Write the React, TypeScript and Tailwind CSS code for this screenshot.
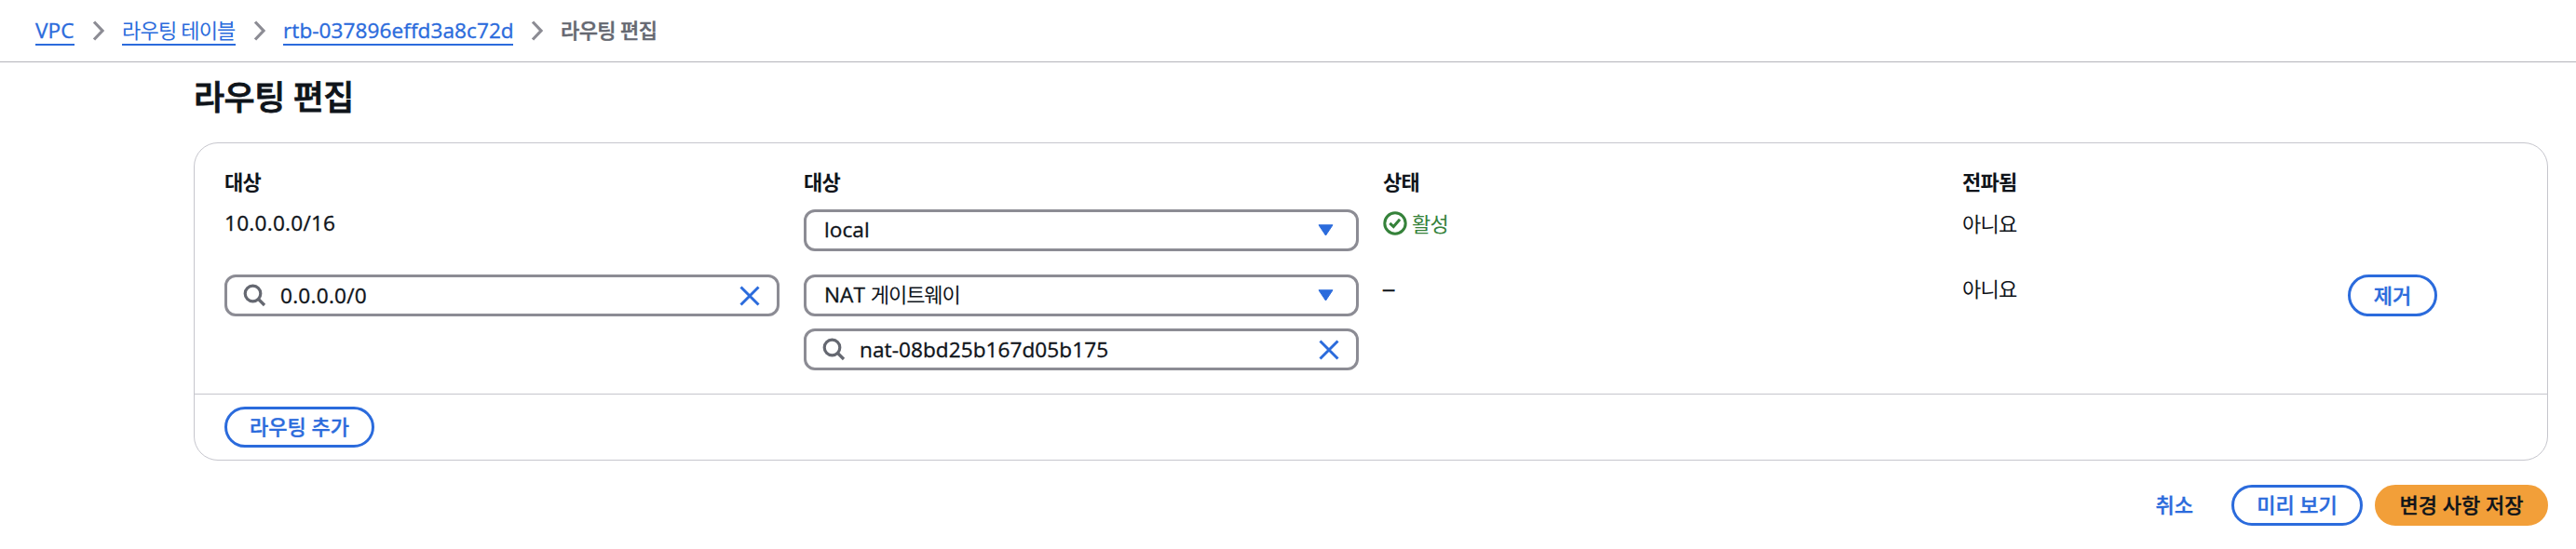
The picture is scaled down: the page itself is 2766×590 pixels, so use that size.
import React from "react";

const Chevron = () => (
  <svg width="14" height="24" viewBox="0 0 14 24" fill="none" stroke="#8c8c94" strokeWidth="3.2" className="shrink-0">
    <path d="M2 2.5l9 9.5-9 9.5" />
  </svg>
);

const SearchIcon = () => (
  <svg width="25" height="25" viewBox="0 0 25 25" fill="none" stroke="#656871" strokeWidth="3.2" className="shrink-0">
    <circle cx="10.5" cy="10.5" r="8.3" />
    <path d="M16 16l7 7" />
  </svg>
);

const CloseIcon = () => (
  <svg width="22" height="22" viewBox="0 0 22 22" fill="none" stroke="#2b6bdc" strokeWidth="3" className="shrink-0">
    <path d="M1.5 1.5l19 19M20.5 1.5l-19 19" />
  </svg>
);

const Caret = () => (
  <svg width="18" height="13" viewBox="0 0 18 13" fill="#2b6bdc" stroke="#2b6bdc" strokeLinejoin="round" className="shrink-0">
    <path d="M1 .8h15L8.5 12z" />
  </svg>
);

const CheckIcon = () => (
  <svg width="26" height="26" viewBox="0 0 26 26" fill="none" stroke="#35823a" strokeWidth="3" className="shrink-0">
    <circle cx="13" cy="13" r="11.2" />
    <path d="M7.3 12.8l4 3.8 6.8-7.8" />
  </svg>
);

const Latin = ({ children }: { children: string }) => (
  <span className="text-[22.6px] font-medium tracking-[0.06px] [-webkit-text-stroke:0.35px]">{children}</span>
);

const Digits = ({ children }: { children: string }) => (
  <span className="text-[22.6px] font-medium tracking-[0.25px] [-webkit-text-stroke:0.35px]">{children}</span>
);

const Hangul = ({ children }: { children: string }) => (
  <span className="tracking-[-0.8px]">{children}</span>
);

const Select = ({ children }: { children: React.ReactNode }) => (
  <div className="flex h-[45px] w-[596px] items-center justify-between rounded-[12px] border-[3px] border-[#8c8c94] pr-[23px] pb-px pl-[19px]">
    <span className="-mt-px">{children}</span>
    <Caret />
  </div>
);

const SearchInput = ({ children }: { children: React.ReactNode }) => (
  <div className="flex h-[45px] w-[596px] items-center rounded-[12px] border-[3px] border-[#8c8c94] pr-[18px] pl-[17px]">
    <SearchIcon />
    <span className="-mt-px ml-[15px] flex-1">{children}</span>
    <CloseIcon />
  </div>
);

const Button = ({ children, className }: { children: React.ReactNode; className: string }) => (
  <button className={`flex shrink-0 items-center justify-center rounded-full border-[3px] pb-0.5 font-medium whitespace-nowrap [-webkit-text-stroke:0.35px] ${className}`}>
    {children}
  </button>
);

const Crumb = ({ children, className }: { children: React.ReactNode; className: string }) => (
  <a className={`h-[29px] shrink-0 border-b-2 border-[#2b6bdc] leading-[25px] whitespace-nowrap text-[#2b6bdc] ${className}`}>
    {children}
  </a>
);

export default function App() {
  return (
    <div className="h-[590px] w-[2766px] overflow-hidden bg-white font-['Open_Sans','Noto_Sans_CJK_KR',sans-serif] text-[22px] leading-[30px] text-[#0f141a]">
      <nav className="flex h-[67px] items-start border-b border-[#b4b4bb] pt-5 pl-[38px]">
        <Crumb className="w-[42px]"><Latin>VPC</Latin></Crumb>
        <div className="mr-[18px] ml-[19px] flex h-[25px] items-center"><Chevron /></div>
        <Crumb className="w-[122px]"><Hangul>라우팅 테이블</Hangul></Crumb>
        <div className="mr-[18px] ml-[19px] flex h-[25px] items-center"><Chevron /></div>
        <Crumb className="w-[247px]"><Latin>rtb-037896effd3a8c72d</Latin></Crumb>
        <div className="mr-[18px] ml-[19px] flex h-[25px] items-center"><Chevron /></div>
        <span className="leading-[25px] font-medium tracking-[-0.6px] text-[#656871] [-webkit-text-stroke:0.45px]">라우팅 편집</span>
      </nav>
      <main className="pr-[30px] pl-[208px]">
        <h1 className="h-[86px] pt-[14px] text-[36px] leading-[48px] font-medium tracking-[-0.5px] [-webkit-text-stroke:0.8px]">라우팅 편집</h1>
        <section className="flex h-[342px] flex-col rounded-[26px] border border-[#c6c6cd]">
          <div className="h-[270px] border-b border-[#c6c6cd] px-8 pt-[26px]">
            <div className="grid h-[45px] grid-cols-[622px_622px_622px_414px_auto] font-bold tracking-[-0.8px]">
              <span>대상</span>
              <span>대상</span>
              <span>상태</span>
              <span>전파됨</span>
            </div>
            <div className="grid h-[70px] grid-cols-[622px_622px_622px_414px_auto] items-start">
              <Digits>10.0.0.0/16</Digits>
              <Select><Latin>local</Latin></Select>
              <span className="flex items-center gap-[5px] text-[#35823a]">
                <CheckIcon />
                <Hangul>활성</Hangul>
              </span>
              <Hangul>아니요</Hangul>
            </div>
            <div className="grid grid-cols-[622px_622px_622px_414px_auto] items-start">
              <SearchInput><Digits>0.0.0.0/0</Digits></SearchInput>
              <div className="flex flex-col gap-[13px]">
                <Select><Latin>NAT </Latin><span className="tracking-[-1.1px]">게이트웨이</span></Select>
                <SearchInput><Latin>nat-08bd25b167d05b175</Latin></SearchInput>
              </div>
              <span className="pt-px font-['Liberation_Sans',sans-serif] [-webkit-text-stroke:0.6px]">–</span>
              <Hangul>아니요</Hangul>
              <Button className="h-[45px] w-[96px] border-[#2b6bdc] text-[#2b6bdc]">제거</Button>
            </div>
          </div>
          <div className="px-8 pt-[13px]">
            <Button className="h-[44px] w-[161px] border-[#2b6bdc] text-[#2b6bdc]">라우팅 추가</Button>
          </div>
        </section>
        <footer className="flex justify-end pt-[26px]">
          <Button className="mr-[38px] h-[44px] border-transparent text-[#2b6bdc]">취소</Button>
          <Button className="mr-[13px] h-[44px] w-[141px] border-[#2b6bdc] text-[#2b6bdc]">미리 보기</Button>
          <Button className="h-[44px] w-[186px] border-[#f29f39] bg-[#f29f39]">변경 사항 저장</Button>
        </footer>
      </main>
    </div>
  );
}
